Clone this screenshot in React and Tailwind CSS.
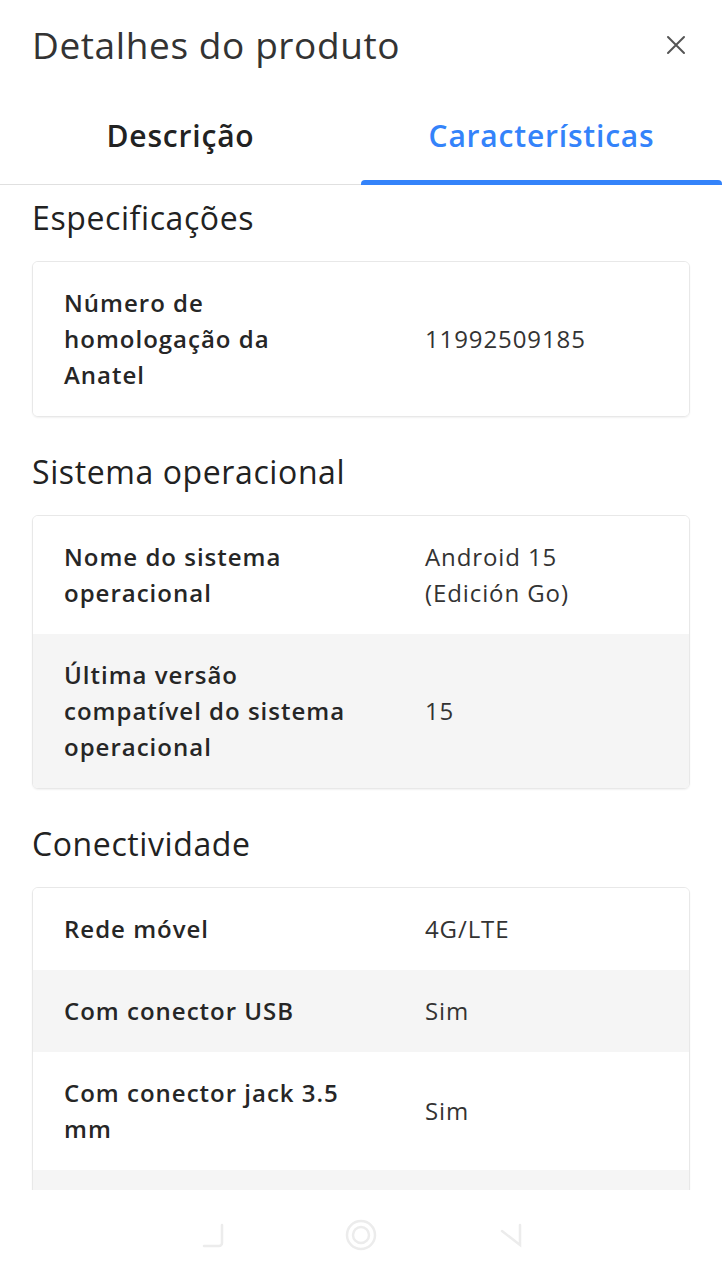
const sections = [
  {
    title: 'Especificações',
    rows: [[['Número de', 'homologação da', 'Anatel'], ['11992509185']]],
  },
  {
    title: 'Sistema operacional',
    rows: [
      [['Nome do sistema', 'operacional'], ['Android 15', '(Edición Go)']],
      [['Última versão', 'compatível do sistema', 'operacional'], ['15']],
    ],
  },
  {
    title: 'Conectividade',
    rows: [
      [['Rede móvel'], ['4G/LTE']],
      [['Com conector USB'], ['Sim']],
      [['Com conector jack 3.5', 'mm'], ['Sim']],
      [[], []],
    ],
  },
]

function Lines({ lines }) {
  return lines.map((l, i) => (
    <span key={i} className="block whitespace-nowrap">
      {l}
    </span>
  ))
}

function SpecTable({ rows }) {
  return (
    <div className="overflow-hidden rounded-md border border-[#e8e8e8] shadow-[0_1px_2px_rgba(0,0,0,0.06)]">
      {rows.map(([label, value], i) => (
        <div
          key={i}
          className={`grid min-h-[82px] grid-cols-[361px_1fr] items-center px-[31px] py-[23px] leading-[36px] ${i % 2 ? 'bg-[#f5f5f5]' : 'bg-white'}`}
        >
          <div className="text-[24px] font-semibold tracking-[1px] text-[#262626]">
            <Lines lines={label} />
          </div>
          <div className="text-[24px] tracking-[0.9px] text-[#333]">
            <Lines lines={value} />
          </div>
        </div>
      ))}
    </div>
  )
}

export default function App() {
  return (
    <div className="flex h-[1280px] flex-col overflow-hidden bg-white font-['Open_Sans',sans-serif] text-[#333]">
      <header className="flex h-[90px] shrink-0 items-center justify-between pl-8 pr-[36px]">
        <h1 className="text-[37px] font-normal tracking-[0.6px] text-[#333]">Detalhes do produto</h1>
        <button type="button" aria-label="Fechar" className="text-[#555]">
          <svg width="20" height="20" viewBox="0 0 20 20" fill="none" stroke="currentColor" strokeWidth="2" strokeLinecap="round">
            <path d="M2 2l16 16M18 2L2 18" />
          </svg>
        </button>
      </header>

      <nav className="grid shrink-0 grid-cols-2 border-b border-[#e0e0e0]">
        <button type="button" className="flex h-[94px] items-center justify-center pb-1 text-[30px] font-semibold tracking-[0.8px] text-[#222]">
          Descrição
        </button>
        <button type="button" className="relative flex h-[94px] items-center justify-center pb-1 text-[30px] font-semibold tracking-[0.8px] text-[#3483fa]">
          Características
          <span className="absolute inset-x-0 -bottom-px h-[5px] rounded-t-[4px] bg-[#3483fa]" />
        </button>
      </nav>

      <main className="min-h-0 flex-1 overflow-hidden px-8 pt-[13px]">
        {sections.map((s, i) => (
          <section key={s.title} className={i ? 'mt-[35px]' : ''}>
            <h2 className="mb-[23px] text-[32px] font-normal leading-[40px] tracking-[0.6px] text-[#222]">{s.title}</h2>
            <SpecTable rows={s.rows} />
          </section>
        ))}
      </main>

      <footer className="flex h-[90px] shrink-0 items-center justify-center gap-[118px] bg-white text-[#ececec]">
        <svg width="28" height="28" viewBox="0 0 28 28" fill="none" stroke="currentColor" strokeWidth="2.5" strokeLinecap="round">
          <path d="M24 4v18a3 3 0 0 1-3 3H6" />
        </svg>
        <svg width="34" height="34" viewBox="0 0 34 34" fill="none" stroke="currentColor" strokeWidth="2.5">
          <circle cx="17" cy="17" r="14" />
          <circle cx="17" cy="17" r="8" />
        </svg>
        <svg width="28" height="28" viewBox="0 0 28 28" fill="none" stroke="currentColor" strokeWidth="2.5" strokeLinecap="round">
          <path d="M24 4v20L6 10" />
        </svg>
      </footer>
    </div>
  )
}
